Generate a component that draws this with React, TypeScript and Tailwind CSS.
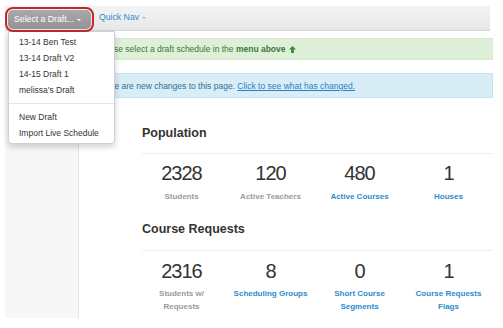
import React from 'react';

const stats1 = [
  { value: '2328', label: ['Students'], link: false },
  { value: '120', label: ['Active Teachers'], link: false },
  { value: '480', label: ['Active Courses'], link: true },
  { value: '1', label: ['Houses'], link: true },
];

const stats2 = [
  { value: '2316', label: ['Students w/', 'Requests'], link: false },
  { value: '8', label: ['Scheduling Groups'], link: true },
  { value: '0', label: ['Short Course', 'Segments'], link: true },
  { value: '1', label: ['Course Requests', 'Flags'], link: true },
];

const drafts = ['13-14 Ben Test', '13-14 Draft V2', '14-15 Draft 1', "melissa's Draft"];

type Stat = { value: string; label: string[]; link: boolean };

const StatRow = ({ items, labelGap }: { items: Stat[]; labelGap: string }) => (
  <div className="ml-[-5px] grid w-[356px] grid-cols-4">
    {items.map((s) => (
      <div key={s.label.join(' ')} className="flex flex-col items-center text-center">
        <div className="text-[20px] leading-[24px] tracking-[-1px] text-[#333]">{s.value}</div>
        <div
          className={`${labelGap} text-[8px] font-bold leading-[13px] ${
            s.link ? 'text-[#2a8bd0]' : 'text-[#9a9a9a]'
          }`}
        >
          {s.label.map((l) => (
            <div key={l}>{l}</div>
          ))}
        </div>
      </div>
    ))}
  </div>
);

const App: React.FC = (): JSX.Element => {
  return (
    <div className="h-[328px] w-[503px] overflow-hidden bg-white font-['Liberation_Sans',Arial,sans-serif]">
      <div className="relative ml-[5px] mt-[6px] flex h-[312px] w-[485px] flex-col">
        {/* Top nav */}
        <div className="flex h-[25px] shrink-0 items-start border-b border-[#d6d6d6] bg-gradient-to-b from-[#f4f4f4] to-[#e7e7e7]">
          <div className="relative z-20 mt-[1px] h-[25px] w-[89px] rounded-[8px] border-2 border-[#c1272d] p-[1px]">
            <div className="flex h-full items-center rounded-[5px] bg-gradient-to-b from-[#a9a9a9] to-[#939393] pl-[6px] text-[8.7px] text-white">
              Select a Draft...
              <span className="ml-[3px] inline-block h-0 w-0 border-x-[2px] border-t-[2.5px] border-x-transparent border-t-white" />
            </div>
          </div>
          <div className="ml-[5px] flex h-[24px] items-center text-[8.7px] text-[#2a8bd0]">
            Quick Nav
            <span className="ml-[3px] inline-block h-0 w-0 border-x-[2px] border-t-[2.5px] border-x-transparent border-t-[#8fc0e6]" />
          </div>
        </div>

        {/* Draft dropdown */}
        <div className="absolute left-[3px] top-[25px] z-10 w-[107px] rounded-b-[4px] border border-[#d0d0d0] bg-white pb-[2px] pt-[2px] text-[8.5px] leading-[16px] text-[#333] shadow-[0_3px_6px_rgba(0,0,0,0.18)]">
          {drafts.map((d) => (
            <div key={d} className="pl-[10px]">
              {d}
            </div>
          ))}
          <div className="my-[5px] border-t border-[#e5e5e5]" />
          <div className="pl-[10px]">New Draft</div>
          <div className="pl-[10px]">Import Live Schedule</div>
        </div>

        <div className="flex flex-1">
          {/* Sidebar */}
          <div className="w-[74px] shrink-0 border-r border-[#e6e6e6] bg-[#f7f7f7]" />

          {/* Main */}
          <div className="flex-1">
            <div className="ml-[7px] mt-[7px] flex h-[22px] items-center border border-[#d6ebcb] bg-[#dff0d8] pl-[10px] text-[8.5px] text-[#3c763d]">
              Please select a draft schedule in the&nbsp;<span className="font-bold">menu above</span>
              <svg className="ml-[3px] h-[7px] w-[7px]" viewBox="0 0 10 10" fill="#3c8a3c">
                <path d="M5 0 L10 5 L7 5 L7 10 L3 10 L3 5 L0 5 Z" />
              </svg>
            </div>
            <div className="ml-[7px] mt-[13px] flex h-[25px] items-center border border-[#c4e3f1] bg-[#d9edf7] pl-[10px] pt-[2px] text-[8.5px] text-[#31708f]">
              There are new changes to this page.&nbsp;
              <span className="text-[#2a7fc0] underline">Click to see what has changed.</span>
            </div>

            <div className="pl-[63px]">
              <h2 className="mt-[26px] text-[12.5px] font-bold leading-[18px] text-[#333]">Population</h2>
              <div className="mt-[11px] border-t border-[#eeeeee] pt-[7px]">
                <StatRow items={stats1} labelGap="mt-[5px]" />
              </div>

              <h2 className="mt-[17px] text-[12.5px] font-bold leading-[18px] text-[#333]">Course Requests</h2>
              <div className="mt-[12px] border-t border-[#eeeeee] pt-[8px]">
                <StatRow items={stats2} labelGap="mt-[4px]" />
              </div>
            </div>
          </div>
        </div>
      </div>
    </div>
  );
};

export default App;
